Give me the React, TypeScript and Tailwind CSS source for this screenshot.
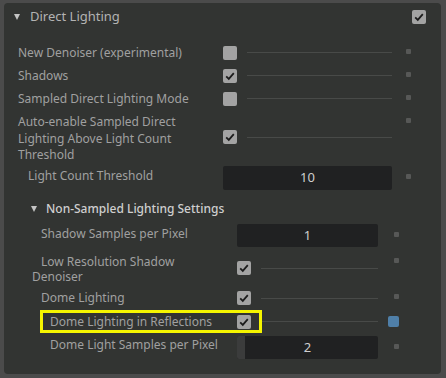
import type { ReactNode } from 'react';

const font = { fontFamily: '"Noto Sans", "Open Sans", sans-serif' };

function Check({ on }: { on: boolean }) {
  return (
    <div className="w-[14px] h-[14px] rounded-[2px] bg-[#a3a3a3] flex items-center justify-center shrink-0">
      {on && (
        <svg width="12" height="12" viewBox="0 0 12 12">
          <path d="M2.2 6.4 L4.8 8.9 L9.8 3.2" fill="none" stroke="#1c1c1c" strokeWidth="1.8" />
        </svg>
      )}
    </div>
  );
}

function Dot({ blue }: { blue?: boolean }) {
  if (blue) return <div className="w-[11px] h-[11px] rounded-[2px] bg-[#4f7fa8]" />;
  return <div className="w-[5px] h-[5px] rounded-[1px] bg-[#575857]" />;
}

function Tri() {
  return <div className="w-0 h-0 border-l-[3.5px] border-r-[3.5px] border-t-[6px] border-l-transparent border-r-transparent border-t-[#c4c4c4]" />;
}

function CheckLine({ on }: { on: boolean }) {
  return (
    <div className="flex items-center w-full">
      <Check on={on} />
      <div className="ml-[10px] flex-1 h-px bg-[#484a48]" />
    </div>
  );
}

function NumField({ value, fill }: { value: string; fill?: boolean }) {
  return (
    <div className="w-full h-[23px] rounded-[2px] bg-[#202122] flex relative overflow-hidden">
      {fill && <div className="w-[8px] h-full bg-[#3b3c3c]" />}
      <div className="absolute inset-0 flex items-center justify-center text-[13px] text-[#cfcfcf]">{value}</div>
    </div>
  );
}

function Row({
  label,
  nested,
  h,
  control,
  dotTop,
  blue,
  labelClass,
  dotClass,
}: {
  label: ReactNode;
  nested?: boolean;
  h: string;
  control: ReactNode;
  dotTop?: boolean;
  blue?: boolean;
  labelClass?: string;
  dotClass?: string;
}) {
  return (
    <div className={`flex ${h} ${dotTop ? 'items-stretch' : 'items-center'}`}>
      <div className={`${nested ? 'w-[233px]' : 'w-[219px]'} shrink-0 ${labelClass ?? ''}`}>{label}</div>
      <div className={`${nested ? 'w-[141px]' : 'w-[169px]'} shrink-0 flex items-center`}>{control}</div>
      <div className={`flex ${blue ? 'ml-[10px]' : nested ? 'ml-[16px]' : 'ml-[14px]'} ${dotTop ? 'items-start' : 'items-center'} ${dotClass ?? (dotTop ? 'pt-[8px]' : '-mt-[3px]')}`}>
        <Dot blue={blue} />
      </div>
    </div>
  );
}

export default function App() {
  return (
    <div className="w-[446px] h-[378px] bg-[#4b4b4b] pt-[3px] pl-[4px] text-[12px] text-[#a0a0a0]" style={font}>
      <div className="relative w-[437px] h-[371px] rounded-[4px] bg-[#323432]">
        {/* header */}
        <div className="flex items-center h-[28px]">
          <div className="ml-[10px] mr-[10px]"><Tri /></div>
          <div className="text-[13px] text-[#b3b3b3]">Direct Lighting</div>
          <div className="ml-auto mr-[15px]"><Check on /></div>
        </div>

        <div className="mt-[10px]">
          <Row h="h-[23px]" labelClass="pl-[14px]" label="New Denoiser (experimental)" control={<CheckLine on={false} />} />
          <Row h="h-[23px]" labelClass="pl-[14px]" label="Shadows" control={<CheckLine on />} />
          <Row h="h-[23px]" labelClass="pl-[14px]" label="Sampled Direct Lighting Mode" control={<CheckLine on={false} />} />
          <Row
            h="h-[54px]"
            dotTop
            labelClass="pl-[14px] pt-[4px] leading-[16.5px]"
            label={<>Auto-enable Sampled Direct<br />Lighting Above Light Count<br />Threshold</>}
            control={<CheckLine on />}
          />
          <Row h="h-[28px]" labelClass="pl-[24px] -mt-[5px]" label="Light Count Threshold" control={<div className="w-full h-[24px] rounded-[2px] bg-[#202122] flex items-center justify-center text-[13px] text-[#cfcfcf]">10</div>} />
        </div>

        {/* nested header */}
        <div className="flex items-center h-[25px] mt-[4px]">
          <div className="ml-[27px] mr-[9px]"><Tri /></div>
          <div className="text-[12px] font-medium text-[#cfcfcf]">Non-Sampled Lighting Settings</div>
        </div>

        <div className="mt-[2px]">
          <Row nested h="h-[25px]" labelClass="pl-[37px] -mt-[3px]" label="Shadow Samples per Pixel" control={<NumField value="1" />} />
          <Row
            nested
            h="h-[40px]"
            dotTop
            dotClass="pt-[10px]"
            labelClass="leading-[15px] pt-[6px]"
            label={<><span className="pl-[37px]">Low Resolution Shadow</span><br /><span className="pl-[28px]">Denoiser</span></>}
            control={<CheckLine on />}
          />
          <Row nested h="h-[20px]" labelClass="pl-[37px]" label="Dome Lighting" control={<CheckLine on />} />
          <Row nested h="h-[27px]" labelClass="pl-[46px]" blue dotClass="-mt-[1px]" label="Dome Lighting in Reflections" control={<CheckLine on />} />
          <Row nested h="h-[25px]" labelClass="pl-[46px] -mt-[5px]" label="Dome Light Samples per Pixel" control={<NumField value="2" fill />} />
        </div>

        {/* highlight annotation */}
        <div className="absolute left-[36px] top-[307px] w-[222px] h-[23px] border-[3px] border-[#f5f500]" />
      </div>
    </div>
  );
}
